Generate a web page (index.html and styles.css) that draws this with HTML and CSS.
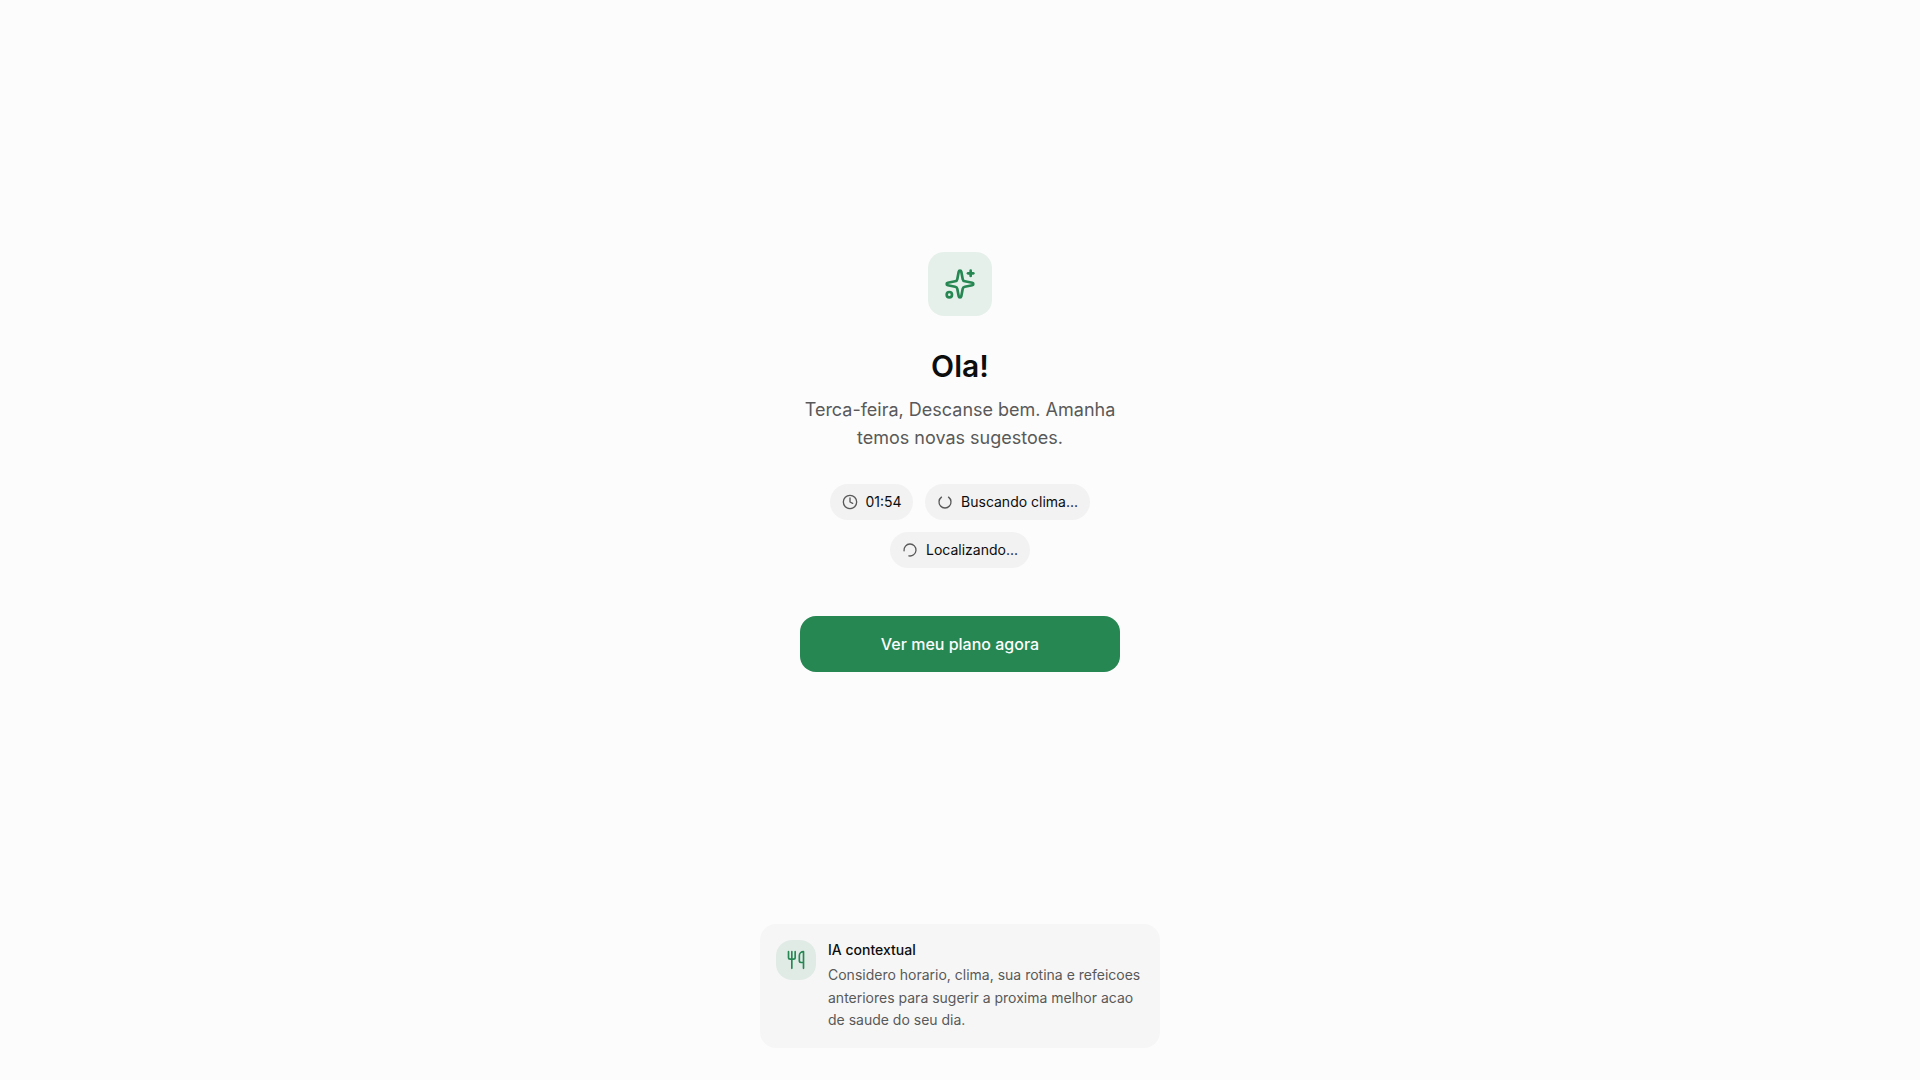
FILE: index.html
```
<!DOCTYPE html>
<html lang="pt-BR">
<head>
<meta charset="utf-8">
<title>Meu plano</title>
<link rel="stylesheet" href="styles.css">
</head>
<body>

<div class="page">
	<main class="welcome">
		<div class="logo">
			<svg class="icon" width="32" height="32" viewBox="0 0 24 24">
				<path d="M11.017 2.814a1 1 0 0 1 1.966 0l1.051 5.558a2 2 0 0 0 1.594 1.594l5.558 1.051a1 1 0 0 1 0 1.966l-5.558 1.051a2 2 0 0 0-1.594 1.594l-1.051 5.558a1 1 0 0 1-1.966 0l-1.051-5.558a2 2 0 0 0-1.594-1.594l-5.558-1.051a1 1 0 0 1 0-1.966l5.558-1.051a2 2 0 0 0 1.594-1.594z"/>
				<path d="M20 2v4"/>
				<path d="M22 4h-4"/>
				<circle cx="4" cy="20" r="2"/>
			</svg>
		</div>
		<h1>Ola!</h1>
		<p class="greeting">Terca-feira, Descanse bem. Amanha temos novas sugestoes.</p>
		<div class="chips">
			<div class="chip chip_time">
				<svg class="icon" width="16" height="16" viewBox="0 0 24 24">
					<circle cx="12" cy="12" r="10"/>
					<path d="M12 6v6l4 2"/>
				</svg>
				<span>01:54</span>
			</div>
			<div class="chip">
				<svg class="icon spinner_weather" width="16" height="16" viewBox="0 0 24 24">
					<path d="M21 12a9 9 0 1 1-6.219-8.56"/>
				</svg>
				<span>Buscando clima...</span>
			</div>
			<div class="chip">
				<svg class="icon spinner_place" width="16" height="16" viewBox="0 0 24 24">
					<path d="M21 12a9 9 0 1 1-6.219-8.56"/>
				</svg>
				<span>Localizando...</span>
			</div>
		</div>
		<button class="plan_btn" type="button">Ver meu plano agora</button>
	</main>

	<div class="info_card">
		<div class="info_icon">
			<svg class="icon" width="20" height="20" viewBox="0 0 24 24">
				<path d="M3 2v7c0 1.1.9 2 2 2h4a2 2 0 0 0 2-2V2"/>
				<path d="M7 2v20"/>
				<path d="M21 15V2a5 5 0 0 0-5 5v6c0 1.1.9 2 2 2h3Zm0 0v7"/>
			</svg>
		</div>
		<div class="info_body">
			<div class="info_title">IA contextual</div>
			<p class="info_text">Considero horario, clima, sua rotina e refeicoes anteriores para sugerir a proxima melhor acao de saude do seu dia.</p>
		</div>
	</div>
</div>

</body>
</html>
```
FILE: styles.css
```
* {
	box-sizing: border-box;
}
body {
	margin: 0;
	background-color: #fcfcfc;
	color: #0c0d0d;
	font-family: Inter, "Liberation Sans", sans-serif;
	-webkit-font-smoothing: antialiased;
}
h1, p {
	margin: 0;
}
.page {
	display: flex;
	flex-direction: column;
	align-items: center;
	min-height: 100vh;
	padding-bottom: 32px;
}
.icon {
	display: block;
	flex-shrink: 0;
	fill: none;
	stroke: currentColor;
	stroke-width: 2;
	stroke-linecap: round;
	stroke-linejoin: round;
}

/* welcome block */
.welcome {
	flex: 1;
	display: flex;
	flex-direction: column;
	align-items: center;
	justify-content: center;
	width: 320px;
	text-align: center;
}
.logo {
	display: flex;
	align-items: center;
	justify-content: center;
	width: 64px;
	height: 64px;
	margin-bottom: 32px;
	border-radius: 16px;
	background-color: #e6f0ea;
	color: #268753;
}
h1 {
	margin-bottom: 12px;
	font-size: 30px;
	line-height: 36px;
	font-weight: 600;
}
.greeting {
	margin-bottom: 32px;
	font-size: 18px;
	line-height: 28px;
	color: #595959;
}
.chips {
	display: flex;
	flex-wrap: wrap;
	justify-content: center;
	gap: 12px;
	margin-bottom: 48px;
}
.chip {
	display: flex;
	align-items: center;
	gap: 8px;
	padding: 8px 12px;
	border-radius: 18px;
	background-color: #f2f2f2;
	font-size: 14px;
	line-height: 20px;
}
.chip_time {
	gap: 7.5px;
	padding-right: 11.5px;
}
.chip .icon {
	color: #595959;
}
.spinner_weather {
	transform: rotate(-54deg);
}
.spinner_place {
	transform: rotate(173deg);
}
.plan_btn {
	width: 100%;
	height: 56px;
	border: 0;
	border-radius: 16px;
	background-color: #268753;
	color: #fcfcfc;
	font-family: inherit;
	font-size: 16px;
	font-weight: 500;
}

/* bottom card */
.info_card {
	display: flex;
	align-items: flex-start;
	gap: 12px;
	width: 400px;
	padding: 16px;
	border-radius: 16px;
	background-color: #f6f6f6;
}
.info_icon {
	display: flex;
	flex-shrink: 0;
	align-items: center;
	justify-content: center;
	width: 40px;
	height: 40px;
	border-radius: 16px;
	background-color: #e1ebe6;
	color: #268753;
}
.info_title {
	margin-bottom: 4px;
	font-size: 14px;
	line-height: 20px;
	font-weight: 500;
}
.info_text {
	font-size: 14px;
	line-height: 22.75px;
	color: #595959;
}
```
